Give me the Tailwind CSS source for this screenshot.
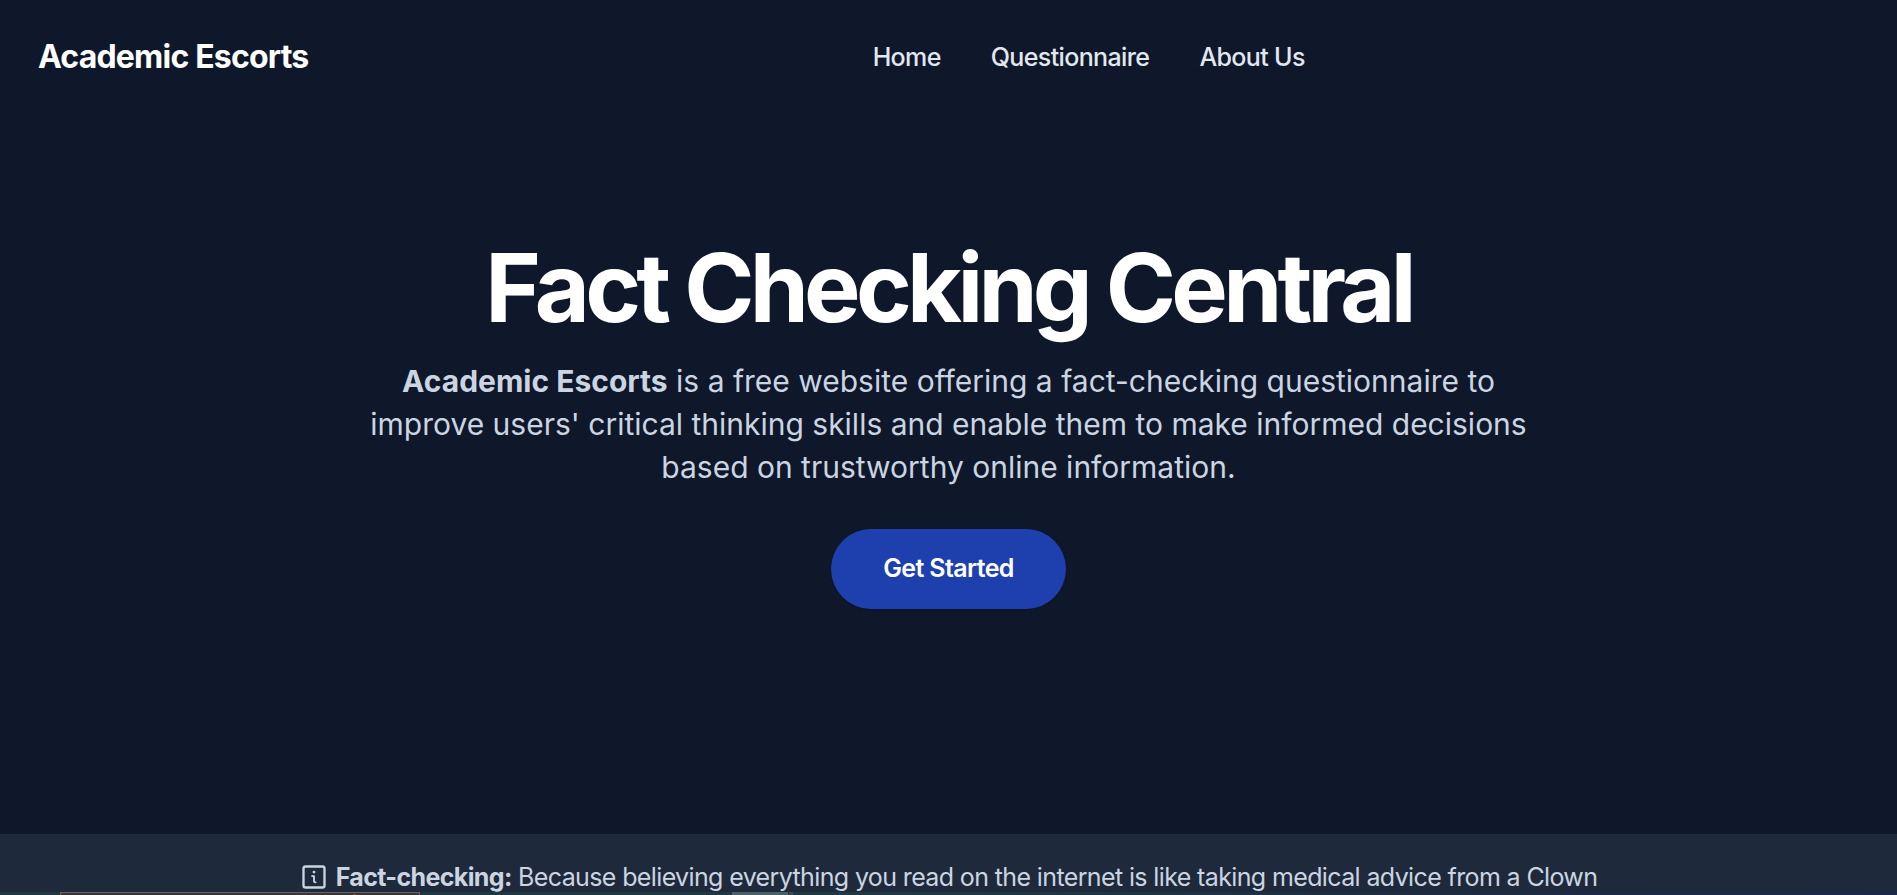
<!DOCTYPE html>
<html lang="en">
<head>
<meta charset="utf-8">
<meta name="viewport" content="width=device-width, initial-scale=1">
<title>Academic Escorts</title>
<script src="https://cdn.jsdelivr.net/npm/@tailwindcss/browser@4"></script>
</head>
<body class="h-screen overflow-hidden bg-[#0f172a] font-['Inter',sans-serif] text-[#cbd5e1]">
<header class="flex items-center py-9 pr-6 pl-[38px]">
  <a href="#" class="text-[32px] leading-[42px] font-bold tracking-tight text-white">Academic Escorts</a>
  <nav aria-label="Main" class="mx-auto flex gap-[50px] pr-1 text-[25px] leading-8 font-medium tracking-tight text-[#e2e8f0]">
    <a href="#">Home</a><a href="#">Questionnaire</a><a href="#">About Us</a>
  </nav>
</header>
<main>
  <section class="flex flex-col items-center pt-[126px] pb-[225px] text-center">
    <h1 class="text-[95px] leading-[96px] font-bold tracking-tighter text-white">Fact Checking Central</h1>
    <p class="mt-6 max-w-[1180px] text-[30px] leading-[43px]"><strong class="font-bold">Academic Escorts</strong> is a free website offering a fact-checking questionnaire to improve users' critical thinking skills and enable them to make informed decisions based on trustworthy online information.</p>
    <button type="button" class="mt-10 h-20 rounded-full bg-[#1e40af] px-[52px] text-[25px] font-semibold tracking-tight text-white shadow-sm">Get Started</button>
  </section>
  <section class="bg-[#1e293b] pt-[29px]">
    <p class="flex items-center justify-center gap-2 pb-px text-[25px] leading-7 tracking-tight">
      <svg class="size-7" viewBox="0 0 24 24" fill="none" stroke="currentColor" stroke-width="2" stroke-linecap="round" stroke-linejoin="round" aria-hidden="true"><rect x="3" y="3" width="18" height="18" rx="1.8"/><path d="M10.3 11.2H12v4.4q0 1 1.4 1" stroke-width="1.6"/><circle cx="12" cy="7.8" r="1.2" fill="currentColor" stroke="none"/></svg>
      <span><strong class="font-bold">Fact-checking:</strong> Because believing everything you read on the internet is like taking medical advice from a Clown</span>
    </p>
    <svg class="block h-[3px] w-full" viewBox="0 0 1897 3" preserveAspectRatio="none" aria-hidden="true">
      <defs><linearGradient id="wall"><stop offset="0" stop-color="#213742"/><stop offset=".5" stop-color="#203843"/><stop offset=".75" stop-color="#1e2c42"/><stop offset="1" stop-color="#1b2848"/></linearGradient></defs>
      <path fill="url(#wall)" d="M0 0h1897v3H0z"/>
      <path fill="#686360" d="M60 0h360v3H60z"/>
      <path fill="#383534" d="M61 1h358v2H61z"/>
      <path fill="#8a4a22" d="M353 2h3v1h-3z"/>
      <path fill="#4b5f67" d="M732 0h56v3h-56z"/>
      <path fill="#3d4a52" d="M789 0h4v3h-4z"/>
    </svg>
  </section>
</main>
</body>
</html>
